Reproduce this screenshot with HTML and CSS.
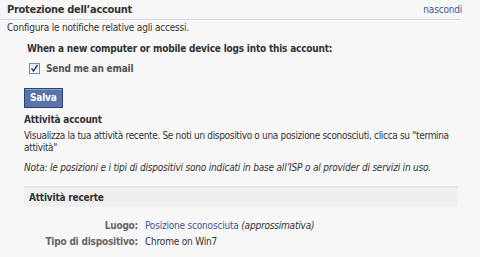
FILE: index.html
```html
<!DOCTYPE html>
<html>
<head>
<meta charset="utf-8">
<link rel="stylesheet" href="styles.css">
</head>
<body>
<div class="page">
  <div class="header">
    <span class="title">Protezione dell’account</span>
    <a class="hide" href="#">nascondi</a>
  </div>
  <div class="intro">Configura le notifiche relative agli accessi.</div>
  <div class="section">
    <div class="question">When a new computer or mobile device logs into this account:</div>
    <label class="check"><span class="box"><svg width="9" height="9" viewBox="0 0 9 9"><path d="M1.5 4.5 L3.5 7 L7.5 1" fill="none" stroke="#2b3f7a" stroke-width="1.4"/></svg></span>Send me an email</label>
  </div>
  <div class="content">
    <button class="save">Salva</button>
    <div class="subtitle">Attività account</div>
    <p class="desc">Visualizza la tua attività recente. Se noti un dispositivo o una posizione sconosciuti, clicca su "termina attività"</p>
    <p class="note">Nota: le posizioni e i tipi di dispositivi sono indicati in base all’ISP o al provider di servizi in uso.</p>
    <div class="recent">Attività recerte</div>
    <div class="details">
      <div class="label">Luogo:</div>
      <div class="value"><a href="#">Posizione sconosciuta</a> <em>(approssimativa)</em></div>
      <div class="label">Tipo di dispositivo:</div>
      <div class="value">Chrome on Win7</div>
    </div>
  </div>
</div>
</body>
</html>
```
FILE: styles.css
```css
html, body {
  margin: 0;
  padding: 0;
  background: #f7f7f7;
}
body {
  font-family: "DejaVu Sans Condensed", "DejaVu Sans", sans-serif;
  font-size: 10px;
  letter-spacing: -0.2px;
  line-height: 13px;
  color: #333;
}
a {
  color: #3b5998;
  text-decoration: none;
}
.page {
  width: 460px;
}
.header {
  display: flex;
  justify-content: space-between;
  align-items: flex-end;
  padding: 3px 0 3px 7px;
  border-bottom: 1px solid #d3d7df;
}
.title {
  font-weight: bold;
  font-size: 11px;
  letter-spacing: -0.3px;
  color: #333;
}
.hide {
  margin-right: -2px;
}
.intro {
  padding: 1px 7px 0;
}
.section {
  padding: 8px 0 0 27px;
}
.question {
  font-weight: bold;
  color: #333;
}
.check {
  display: flex;
  align-items: center;
  gap: 6px;
  margin: 7px 0 0 2px;
  font-weight: bold;
  color: #555;
}
.box {
  width: 9px;
  height: 9px;
  border: 1px solid #7b8aa8;
  background: linear-gradient(#e4e7ef, #fafbfd);
  display: flex;
}
.content {
  padding: 13px 2px 0 24px;
}
.save {
  display: block;
  font-family: inherit;
  font-size: 10px;
  letter-spacing: -0.2px;
  line-height: 12px;
  font-weight: bold;
  color: #fff;
  background: #5b74a8;
  border: 1px solid #29447e;
  box-shadow: inset 0 1px 0 #8a9cc2;
  padding: 3px 5px;
  margin: 0;
  height: 20px;
}
.subtitle {
  font-weight: bold;
  margin-top: 5px;
}
.desc {
  margin: 4px 0 0;
  line-height: 12px;
  letter-spacing: -0.33px;
}
.note {
  margin: 7px 0 0;
  font-style: italic;
}
.recent {
  margin-top: 12px;
  background: #efefef;
  border-top: 1px solid #e2e2e2;
  padding: 4px 5px 3px;
  font-weight: bold;
}
.details {
  display: grid;
  grid-template-columns: 114px auto;
  column-gap: 7px;
  row-gap: 3px;
  margin-top: 12px;
}
.label {
  text-align: right;
  font-weight: bold;
  color: #666;
}
.value em {
  font-style: italic;
}
```
